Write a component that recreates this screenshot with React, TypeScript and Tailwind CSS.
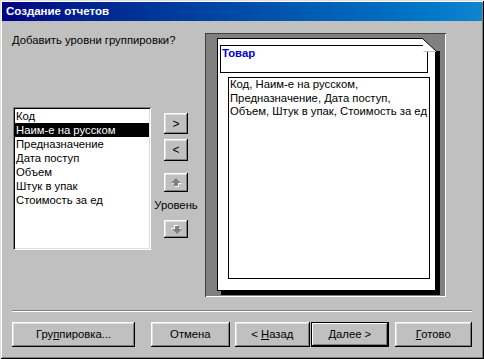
import type { ReactNode } from "react";

const raised =
  "shadow-[inset_-1px_-1px_0_#000,inset_1px_1px_0_#fff,inset_-2px_-2px_0_#808080,inset_2px_2px_0_#dfdfdf]";

const Btn = ({
  children,
  className = "",
  isDefault = false,
}: {
  children: ReactNode;
  className?: string;
  isDefault?: boolean;
}) => (
  <button
    className={`h-[25px] bg-[#c0c0c0] text-black text-[11.3px] flex items-center justify-center ${
      isDefault
        ? "border border-black shadow-[inset_-1px_-1px_0_#000,inset_1px_1px_0_#fff,inset_-2px_-2px_0_#808080]"
        : raised
    } ${className}`}
  >
    {children}
  </button>
);

// disabled embossed arrow (up / down)
const Arrow = ({ down = false }: { down?: boolean }) => (
  <svg width="11" height="9" viewBox="0 0 11 9" className={down ? "rotate-180" : ""}>
    <path d="M6 1 L11 6 L8 6 L8 9 L4 9 L4 6 L1 6 Z" fill="#fff" />
    <path d="M5 0 L10 5 L7 5 L7 8 L3 8 L3 5 L0 5 Z" fill="#808080" />
  </svg>
);

const fields = [
  "Код",
  "Наим-е на русском",
  "Предназначение",
  "Дата поступ",
  "Объем",
  "Штук в упак",
  "Стоимость за ед",
];

export default function App() {
  return (
    <div className="w-[484px] h-[359px] bg-[#c0c0c0] p-[2px] flex flex-col font-['Liberation_Sans',Arial,sans-serif] text-[11.3px] text-black shadow-[inset_1px_1px_0_#dfdfdf,inset_-1px_-1px_0_#000,inset_2px_2px_0_#fff,inset_-2px_-2px_0_#808080]">
      {/* title bar */}
      <div className="h-[19px] bg-linear-to-r from-[#000080] to-[#1084d0] flex items-center pl-[4px] text-white font-bold text-[11.5px]">
        Создание отчетов
      </div>

      <div className="flex-1 flex flex-col px-[10px] pt-[12px]">
        <div className="flex">
          {/* left side */}
          <div className="w-[193px] flex flex-col">
            <p className="leading-[14px]">Добавить уровни группировки?</p>
            <div className="flex mt-[60px]">
              <div className="ml-[1px] w-[138px] h-[143px] bg-white p-[2px] shadow-[inset_1px_1px_0_#808080,inset_-1px_-1px_0_#fff,inset_2px_2px_0_#000,inset_-2px_-2px_0_#dfdfdf]">
                {fields.map((f, i) => (
                  <div
                    key={f}
                    className={`h-[14px] leading-[14px] pl-[1px] ${
                      i === 1 ? "bg-black text-white" : ""
                    }`}
                  >
                    {f}
                  </div>
                ))}
              </div>
              <div className="ml-[3px] w-[44px] flex flex-col items-center">
                <Btn className="mt-[6px] w-[24px] !h-[21px] text-[12px]">&gt;</Btn>
                <Btn className="mt-[5px] w-[24px] !h-[22px] text-[12px]">&lt;</Btn>
                <Btn className="mt-[12px] w-[24px] !h-[19px]">
                  <Arrow />
                </Btn>
                <span className="mt-[7px] leading-[13px]">Уровень</span>
                <Btn className="mt-[8px] w-[24px] !h-[18px]">
                  <Arrow down />
                </Btn>
              </div>
            </div>
          </div>

          {/* preview */}
          <div className="w-[241px] h-[264px] bg-[#808080] pl-[12px] pt-[5px] shadow-[inset_1px_1px_0_#404040,inset_-1px_-1px_0_#fff]">
            <div className="relative w-[219px] h-[253px] bg-white border border-black shadow-[4px_4px_0_#000] flex flex-col">
              <div className="ml-[2px] mt-[6px] w-[208px] h-[28px] border border-black pl-[1px] pt-[1px] leading-[13px] font-bold text-[#0000c8]">
                Товар
              </div>
              <div className="ml-[10px] mt-[4px] w-[202px] h-[202px] border border-black pl-[1px] leading-[13.5px]">
                Код, Наим-е на русском,
                <br />
                Предназначение, Дата поступ,
                <br />
                Объем, Штук в упак, Стоимость за ед
              </div>
              {/* folded corner */}
              <svg
                width="19"
                height="18"
                viewBox="0 0 19 18"
                className="absolute -top-[1px] -right-[6px]"
              >
                <path d="M0 0 H19 V13 H14 Z" fill="#808080" />
                <path d="M1 1 L1 13 L14 13 Z" fill="#fff" />
                <path d="M0.5 0.5 L14.5 13.5" stroke="#000" strokeWidth="1" />
                <path d="M1.5 13.5 H14" stroke="#c0c0c0" strokeWidth="1" />
                <path d="M14.5 13 V18" stroke="#000" strokeWidth="1" />
              </svg>
            </div>
          </div>
        </div>

        {/* separator */}
        <div className="mt-[13px] w-[460px] border-t border-t-[#808080] border-b border-b-white" />

        {/* buttons */}
        <div className="mt-[10px] flex">
          <Btn className="w-[124px]">
            <span>
              Гру<u>п</u>пировка...
            </span>
          </Btn>
          <Btn className="ml-[16px] w-[79px]">Отмена</Btn>
          <Btn className="ml-[5px] w-[76px]">
            <span>
              &lt; <u>Н</u>азад
            </span>
          </Btn>
          <Btn isDefault className="ml-[1px] w-[78px]">
            <span>
              <u>Д</u>алее &gt;
            </span>
          </Btn>
          <Btn className="ml-[6px] w-[78px]">
            <span>
              <u>Г</u>отово
            </span>
          </Btn>
        </div>
      </div>
    </div>
  );
}
